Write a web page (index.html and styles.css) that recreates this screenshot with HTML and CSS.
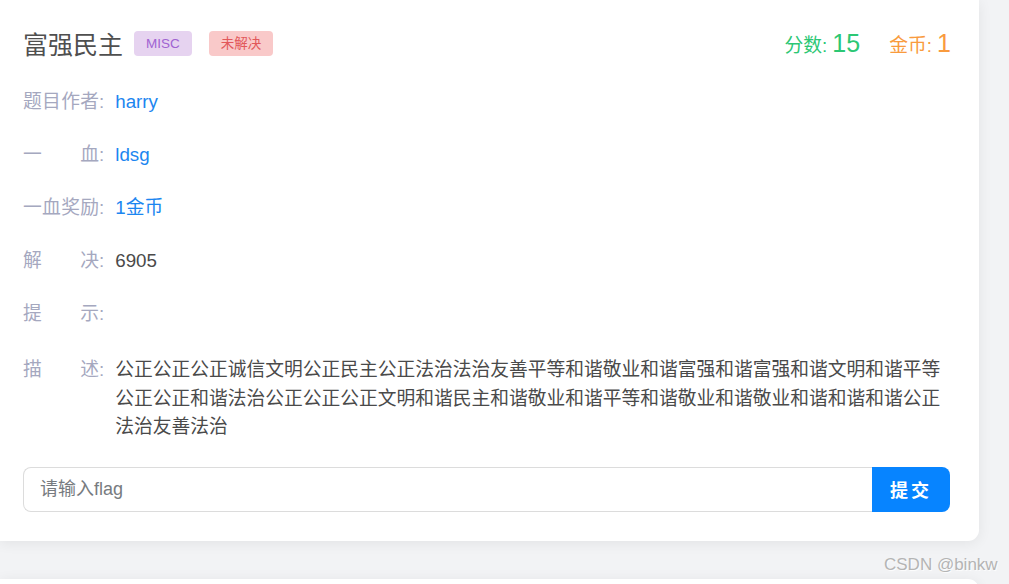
FILE: index.html
```html
<!DOCTYPE html>
<html lang="zh-CN">
<head>
    <meta charset="UTF-8">
    <meta name="viewport" content="width=device-width, initial-scale=1.0">
    <title>富强民主</title>
    <link rel="stylesheet" href="styles.css">
</head>
<body>
    <div class="page">
        <div class="card">
            <div class="card-head">
                <div class="title-box">
                    <span class="title">富强民主</span>
                    <span class="tag tag-type">MISC</span>
                    <span class="tag tag-state">未解决</span>
                </div>
                <div class="stats">
                    <span class="stat score">分数: <b>15</b></span>
                    <span class="stat coin">金币: <b>1</b></span>
                </div>
            </div>
            <div class="info">
                <div class="row">
                    <span class="label"><i>题目作者</i>:</span>
                    <span class="value link">harry</span>
                </div>
                <div class="row">
                    <span class="label"><i>一血</i>:</span>
                    <span class="value link">ldsg</span>
                </div>
                <div class="row">
                    <span class="label"><i>一血奖励</i>:</span>
                    <span class="value link">1金币</span>
                </div>
                <div class="row">
                    <span class="label"><i>解决</i>:</span>
                    <span class="value">6905</span>
                </div>
                <div class="row">
                    <span class="label"><i>提示</i>:</span>
                    <span class="value"></span>
                </div>
                <div class="row desc">
                    <span class="label"><i>描述</i>:</span>
                    <span class="value">公正公正公正诚信文明公正民主公正法治法治友善平等和谐敬业和谐富强和谐富强和谐文明和谐平等公正公正和谐法治公正公正公正文明和谐民主和谐敬业和谐平等和谐敬业和谐敬业和谐和谐和谐公正法治友善法治</span>
                </div>
            </div>
            <div class="submit-box">
                <input class="flag-input" type="text" placeholder="请输入flag">
                <button class="submit-btn">提交</button>
            </div>
        </div>
        <div class="card next"></div>
        <div class="mark">CSDN @binkw</div>
    </div>
</body>
</html>
```

FILE: styles.css
```css
* {
    margin: 0;
    padding: 0;
    box-sizing: border-box;
    font-family: "Liberation Sans", "Noto Sans CJK SC", sans-serif;
}
body {
    background: #f2f3f5;
    height: 100vh;
    overflow: hidden;
}
.page {
    position: relative;
    width: 979px;
    height: 100%;
}
.card {
    background: #fff;
    border-radius: 0 0 11px 0;
    box-shadow: 0 2px 14px rgba(0, 0, 0, 0.07);
    padding: 23px 29px 29px 23px;
}
.card.next {
    margin-top: 38px;
    height: 40px;
    padding: 0;
    border-radius: 0 11px 0 0;
}
.card-head {
    display: flex;
    align-items: center;
    justify-content: space-between;
    height: 40px;
    padding-right: 0;
}
.title-box {
    display: flex;
    align-items: center;
}
.title {
    font-size: 25px;
    color: #4f4f4f;
}
.tag {
    font-size: 13.5px;
    height: 25px;
    line-height: 25px;
    padding: 0 12px;
    border-radius: 4px;
    margin-left: 11px;
}
.tag-type {
    background: #e6d3f0;
    color: #a063d2;
}
.tag-state {
    background: #f9c9c9;
    color: #e2585a;
    margin-left: 17px;
}
.stats {
    display: flex;
    align-items: baseline;
    gap: 29px;
    margin-right: -1px;
}
.stat {
    font-size: 18.75px;
}
.stat b {
    font-weight: normal;
    font-size: 25px;
}
.score {
    color: #2cc774;
}
.coin {
    color: #f99b3e;
}
.info {
    margin-top: 25px;
}
.row {
    display: flex;
    font-size: 18.75px;
    line-height: 28px;
    min-height: 28px;
    margin-bottom: 25px;
}
.row.desc {
    line-height: 28.5px;
    margin-top: 28px;
    margin-bottom: 25px;
}
.label {
    display: flex;
    flex-shrink: 0;
    white-space: nowrap;
    color: #a5a8bf;
    margin-right: 11px;
}
.label i {
    display: block;
    font-style: normal;
    width: 76px;
    white-space: nowrap;
    text-align: justify;
    text-align-last: justify;
}
.value {
    color: #4a4a4a;
}
.value.link {
    color: #1c86f0;
}
.submit-box {
    display: flex;
    height: 45px;
}
.flag-input {
    flex: 1;
    border: 1px solid #dcdcdc;
    border-right: none;
    border-radius: 8px 0 0 8px;
    padding: 0 16px;
    font-size: 18px;
    color: #333;
    outline: none;
}
.flag-input::placeholder {
    color: #777b80;
}
.submit-btn {
    width: 78px;
    background: #0784ff;
    color: #fff;
    border: none;
    border-radius: 0 8px 8px 0;
    font-size: 18px;
    font-weight: bold;
    letter-spacing: 3px;
}
.mark {
    position: absolute;
    left: 884px;
    top: 555px;
    font-size: 17px;
    color: #b4b4b4;
    text-shadow: 1px 1px 1px rgba(255, 255, 255, 0.9);
    white-space: nowrap;
}
```
